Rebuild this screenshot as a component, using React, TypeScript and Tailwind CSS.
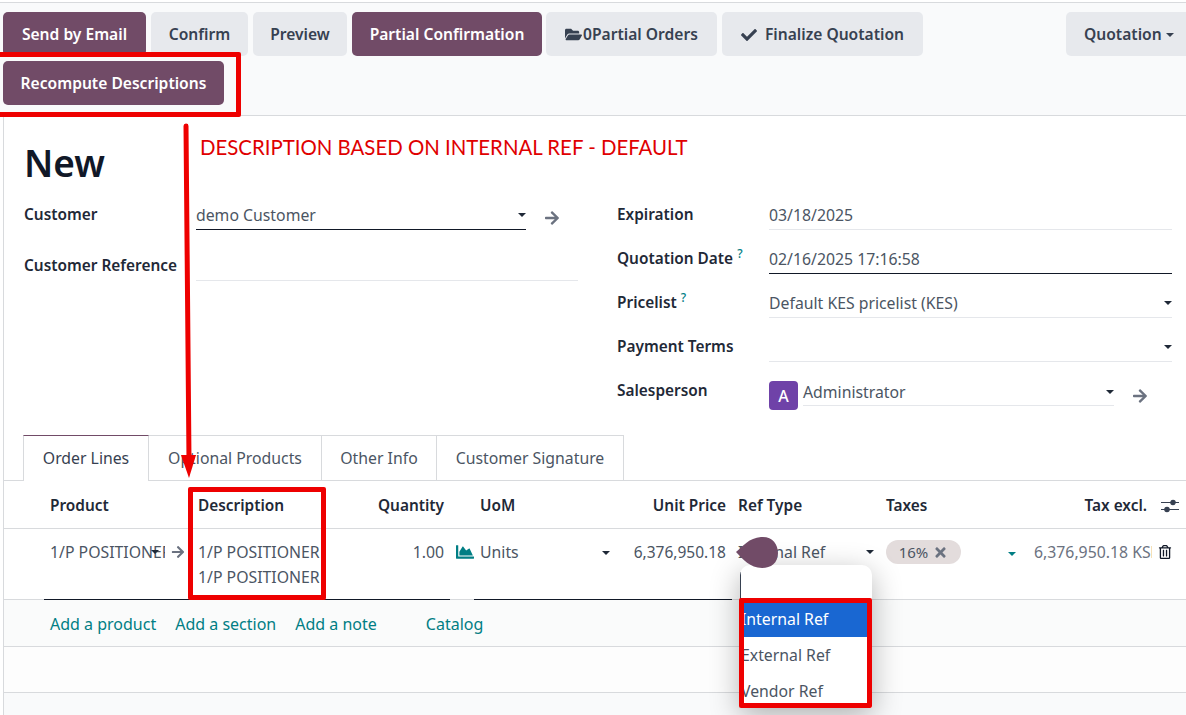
import React from 'react';
import { FaArrowRight, FaCheck, FaChartArea, FaFolderOpen, FaRegTrashAlt, FaTimes } from 'react-icons/fa';

const Caret: React.FC<{ className?: string }> = ({ className = 'border-t-[#1f2937]' }) => (
  <span className={`inline-block w-0 h-0 border-x-[4px] border-t-[4px] border-x-transparent ${className}`} />
);

const ActionButton: React.FC<{ primary?: boolean; className: string; children: React.ReactNode }> = ({
  primary,
  className,
  children,
}) => (
  <div
    className={`h-[44px] pt-px rounded-[5px] flex items-center justify-center text-[15.6px] font-semibold ${
      primary ? 'bg-[#714b67] text-white' : 'bg-[#e7e9ed] text-[#374151]'
    } ${className}`}
  >
    {children}
  </div>
);

const FieldLabel: React.FC<{ text: string; help?: boolean; className: string }> = ({ text, help, className }) => (
  <div className={`h-[29px] leading-[28px] shrink-0 text-[15.4px] font-semibold text-[#1f2937] ${className}`}>
    {text}
    {help && <sup className="ml-[4px] text-[#017e84] text-[12px] font-medium">?</sup>}
  </div>
);

const ToolbarRow = () => (
  <div className="h-[114px] mt-[2px] border-t border-b border-[#d8dadd] bg-[#f9fafb] flex justify-between pl-[3px] pt-[9px]">
    <div className="flex flex-wrap content-start gap-[5px] w-[1000px]">
      <ActionButton primary className="w-[143px]">Send by Email</ActionButton>
      <ActionButton className="w-[97px]">Confirm</ActionButton>
      <ActionButton className="w-[94px]">Preview</ActionButton>
      <ActionButton primary className="w-[190px]">Partial Confirmation</ActionButton>
      <ActionButton className="w-[171px] -ml-px">
        <FaFolderOpen className="text-[17px] mr-[1px]" />
        0Partial Orders
      </ActionButton>
      <ActionButton className="w-[201px]">
        <FaCheck className="text-[16px] mr-[8px]" />
        Finalize Quotation
      </ActionButton>
      <ActionButton primary className="w-[221px]">Recompute Descriptions</ActionButton>
    </div>
    <ActionButton className="w-[120px] rounded-r-none justify-start pl-[18px]">
      Quotation
      <Caret className="border-t-[#374151] ml-[4px]" />
    </ActionButton>
  </div>
);

const FormSheet = () => (
  <>
    <h1 className="h-[70px] pl-[20px] pt-[22px] text-[37px] leading-[50px] font-semibold text-[#111827]">New</h1>
    <div className="h-[220px] pl-[20px] flex">
      <div className="w-[554px] shrink-0">
        <div className="h-[44px] flex items-end">
          <FieldLabel text="Customer" className="w-[172px]" />
          <div className="w-[330px] h-[29px] leading-[29px] border-b border-[#111827] flex items-center justify-between">
            demo Customer
            <Caret />
          </div>
          <FaArrowRight className="ml-[18px] mb-[4px] text-[16px] text-[#6b7280]" />
        </div>
        <div className="h-[51px] flex items-end">
          <FieldLabel text="Customer Reference" className="w-[172px]" />
          <div className="flex-1 h-[29px] border-b border-[#e5e7eb]" />
        </div>
      </div>
      <div className="ml-[39px] w-[555px] shrink-0">
        <div className="h-[44px] flex items-end">
          <FieldLabel text="Expiration" className="w-[152px]" />
          <div className="flex-1 h-[29px] leading-[29px] border-b border-[#e5e7eb]">03/18/2025</div>
        </div>
        <div className="h-[44px] flex items-end">
          <FieldLabel text="Quotation Date" help className="w-[152px]" />
          <div className="flex-1 h-[29px] leading-[29px] border-b border-[#111827]">02/16/2025 17:16:58</div>
        </div>
        <div className="h-[44px] flex items-end">
          <FieldLabel text="Pricelist" help className="w-[152px]" />
          <div className="flex-1 h-[29px] leading-[29px] border-b border-[#e5e7eb] flex items-center justify-between">
            Default KES pricelist (KES)
            <Caret />
          </div>
        </div>
        <div className="h-[44px] flex items-end">
          <FieldLabel text="Payment Terms" className="w-[152px]" />
          <div className="flex-1 h-[29px] border-b border-[#e5e7eb] flex items-center justify-end">
            <Caret />
          </div>
        </div>
        <div className="h-[44px] flex items-end">
          <FieldLabel text="Salesperson" className="w-[152px]" />
          <div className="w-[29px] h-[29px] mb-[-4px] rounded-[4px] bg-[#6f42a8] text-white text-[16px] font-medium flex items-center justify-center shrink-0">
            A
          </div>
          <div className="ml-[5px] w-[311px] h-[29px] pt-[2px] leading-[27px] border-b border-[#e5e7eb] flex items-center justify-between">
            Administrator
            <Caret />
          </div>
          <FaArrowRight className="ml-[18px] mb-[2px] text-[16px] text-[#6b7280]" />
        </div>
      </div>
    </div>
  </>
);

const TabBar = () => (
  <div className="mt-[29px] h-[46px] pl-[19px] flex border-b border-[#d8dadd] text-[#4b5563]">
    <div className="w-[126px] h-[46px] pt-px bg-white border border-[#d8dadd] border-t-[#714b67] border-b-0 flex items-center justify-center text-[#374151]">
      Order Lines
    </div>
    <div className="w-[173px] pt-px border-r border-t border-[#d8dadd] flex items-center justify-center">Optional Products</div>
    <div className="w-[115px] pt-px border-r border-t border-[#d8dadd] flex items-center justify-center">Other Info</div>
    <div className="w-[187px] pt-px border-r border-t border-[#d8dadd] flex items-center justify-center">Customer Signature</div>
  </div>
);

const gridCols = 'grid grid-cols-[46px_148px_170px_76px_182px_100px_160px_148px_118px_34px]';

const OrderTable = () => (
  <>
    <div className={`${gridCols} h-[48px] pt-[2px] border-b border-[#d8dadd] items-center text-[15.4px] font-semibold text-[#1f2937]`}>
      <div />
      <div>Product</div>
      <div>Description</div>
      <div className="text-right">Quantity</div>
      <div className="pl-[36px]">UoM</div>
      <div className="text-right">Unit Price</div>
      <div className="pl-[12px]">Ref Type</div>
      <div>Taxes</div>
      <div className="text-right pr-[5px]">Tax excl.</div>
      <div className="pl-[9px]">
        <svg width="18" height="16" viewBox="0 0 18 16" fill="none" stroke="#374151" strokeWidth="1.2">
          <path d="M0 4.5h18M0 11.5h18" />
          <circle cx="12" cy="4.5" r="2.2" fill="#374151" />
          <circle cx="6" cy="11.5" r="2.2" fill="#374151" />
        </svg>
      </div>
    </div>
    <div className={`${gridCols} h-[70px] leading-[25px] pt-[11px] text-[#4b5563]`}>
      <div />
      <div className="flex items-start h-[25px]">
        <div className="relative w-[115px] overflow-hidden whitespace-nowrap">
          1/P POSITIONER
          <span className="absolute left-[101px] top-[10px] flex">
            <Caret />
          </span>
        </div>
        <FaArrowRight className="ml-[6px] mt-[5px] text-[14px] text-[#6b7280]" />
      </div>
      <div>
        1/P POSITIONER
        <br />
        1/P POSITIONER
      </div>
      <div className="text-right">1.00</div>
      <div className="pl-[12px] flex items-start">
        <FaChartArea className="text-[18px] mt-[3px] text-[#017e84]" />
        <span className="ml-[6px] w-[122px]">Units</span>
        <Caret className="border-t-[#1f2937] mt-[11px]" />
      </div>
      <div className="text-right text-[15.5px]">6,376,950.18</div>
      <div className="pl-[12px] flex items-start">
        <span className="w-[128px]">Internal Ref</span>
        <Caret className="border-t-[#1f2937] mt-[10px]" />
      </div>
      <div className="flex items-start">
        <span className="w-[75px] h-[24px] rounded-full bg-[#e3dcdc] flex items-center justify-center gap-[5px] text-[15px] leading-[24px]">
          16%
          <FaTimes className="text-[15px] text-[#6b7280]" />
        </span>
        <Caret className="border-t-[#017e84] ml-[47px] mt-[12px]" />
      </div>
      <div className="overflow-hidden whitespace-nowrap text-[#6b7280]">6,376,950.18 KSh</div>
      <div className="pl-[6px] pt-[5px]">
        <FaRegTrashAlt className="text-[14px] text-[#111827]" />
      </div>
    </div>
    <div className="flex h-px bg-[#d8dadd]">
      <div className="ml-[40px] w-[406px] bg-[#111827]" />
      <div className="ml-[24px] w-[258px] bg-[#111827]" />
    </div>
    <div className="h-[47px] pt-[2px] border-b border-[#d8dadd] bg-[#fafbfb] pl-[46px] flex items-center text-[16px] text-[#017e84]">
      <span>Add a product</span>
      <span className="ml-[19px]">Add a section</span>
      <span className="ml-[19px]">Add a note</span>
      <span className="ml-[49px]">Catalog</span>
    </div>
    <div className="h-[46px] border-b border-[#d8dadd] bg-[#fdfdfd]" />
    <div className="h-[40px] bg-[#f9fafb]" />
  </>
);

const RefDropdown = () => (
  <div className="absolute left-[740px] top-[565px] w-[132px] h-[143px] bg-white rounded-t-[10px] shadow-[0_8px_30px_rgba(0,0,0,0.3)] overflow-hidden text-[#4b5563] whitespace-nowrap">
    <div className="h-[36px] pt-[7px]">
      <div className="w-px h-[28px] bg-[#374151]" />
    </div>
    <div className="h-[36px] leading-[36px] pl-[1px] bg-[#1967d2] text-white">Internal Ref</div>
    <div className="h-[36px] leading-[36px] pl-[1px]">External Ref</div>
    <div className="h-[36px] leading-[36px] pl-[1px]">Vendor Ref</div>
  </div>
);

// red marks somebody drew over the screenshot
const Annotations = () => (
  <>
    <div className="absolute left-[-6px] top-[52px] w-[247px] h-[65px] border-[5px] border-[#ee0000] rounded-[2px]" />
    <div className="absolute left-[188px] top-[487px] w-[138px] h-[113px] border-[5px] border-[#ee0000] rounded-[2px]" />
    <div className="absolute left-[739px] top-[598px] w-[133px] h-[110px] border-[5px] border-[#ee0000] rounded-[2px]" />
    <div className="absolute left-[200px] top-[133px] text-[20.4px] leading-[28px] text-[#e00000] whitespace-nowrap font-['Lato',sans-serif]">
      DESCRIPTION BASED ON INTERNAL REF - DEFAULT
    </div>
    <svg className="absolute left-[176px] top-[120px]" width="26" height="362" viewBox="0 0 26 362" fill="none">
      <path d="M10 6L13 340" stroke="#ee0000" strokeWidth="5" strokeLinecap="round" />
      <path d="M5 335L20 335L13 358Z" fill="#ee0000" />
    </svg>
    <svg className="absolute left-[735px] top-[536px]" width="44" height="34" viewBox="0 0 44 34">
      <path d="M1 16C8 10 14 2 26 1C37 0 43 8 43 17C43 27 36 32 27 32C15 32 8 23 1 16Z" fill="#714b67" />
    </svg>
  </>
);

export default function App() {
  return (
    <div className="relative h-[715px] overflow-hidden bg-white text-[15.8px] text-[#4b5563] font-['Noto_Sans',sans-serif]">
      <ToolbarRow />
      <div className="ml-[3px] border-l border-[#d8dadd]">
        <FormSheet />
        <TabBar />
        <OrderTable />
      </div>
      <RefDropdown />
      <Annotations />
    </div>
  );
}
